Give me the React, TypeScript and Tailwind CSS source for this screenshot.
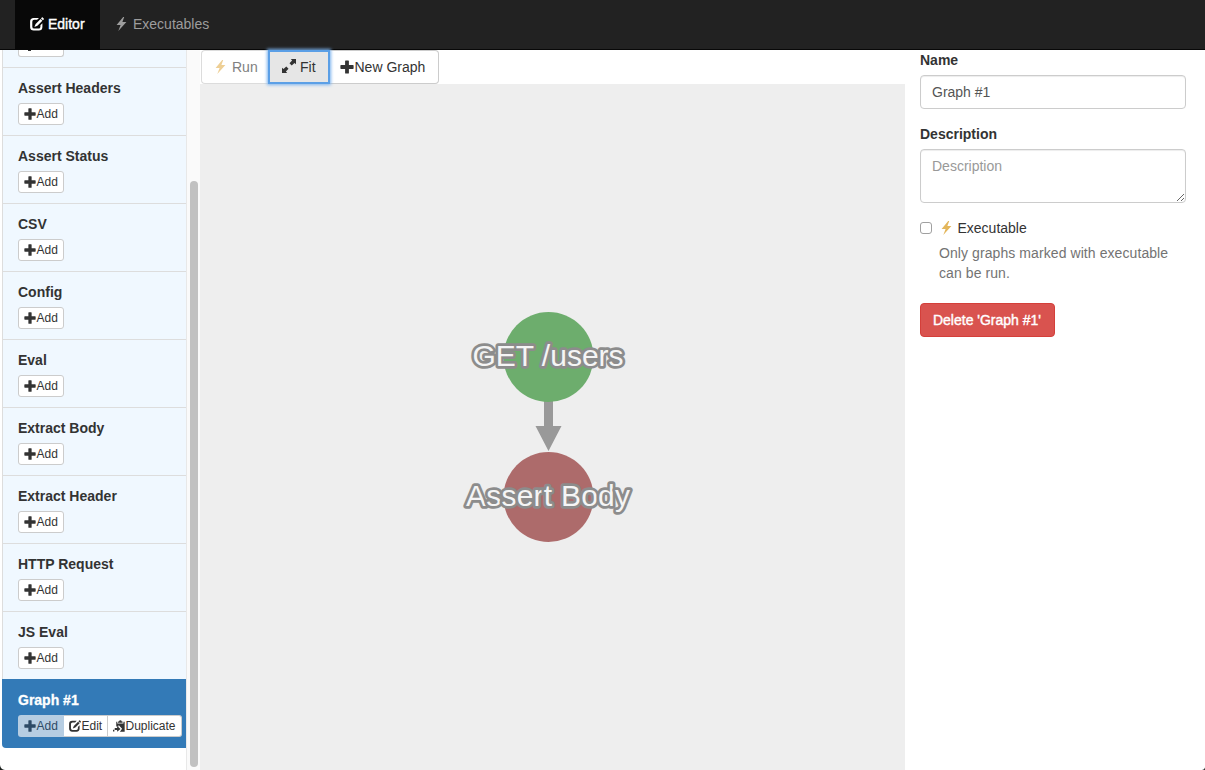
import type { ReactNode } from "react";

type IconProps = { className?: string };

function Icon({ className = "", children }: IconProps & { children: ReactNode }) {
  return (
    <svg viewBox="0 0 14 14" fill="currentColor" className={`shrink-0 ${className}`}>
      {children}
    </svg>
  );
}

const Bolt = ({ className }: IconProps) => (
  <Icon className={className}>
    <path d="M8.2 0 L1.6 8 H5.6 L3.3 14 L11.4 4.9 H7.4 L9.2 0 Z" />
  </Icon>
);

const Plus = ({ className }: IconProps) => (
  <Icon className={className}>
    <path d="M5.1 1 Q5.1 .4 5.7 .4 H8.3 Q8.9 .4 8.9 1 V5.1 H13 Q13.6 5.1 13.6 5.7 V8.3 Q13.6 8.9 13 8.9 H8.9 V13 Q8.9 13.6 8.3 13.6 H5.7 Q5.1 13.6 5.1 13 V8.9 H1 Q.4 8.9 .4 8.3 V5.7 Q.4 5.1 1 5.1 H5.1 Z" />
  </Icon>
);

const Edit = ({ className }: IconProps) => (
  <Icon className={className}>
    <path d="M9 .9 L7.1 2.8 H4.2 Q2.3 2.8 2.3 4.7 V9.7 Q2.3 11.6 4.2 11.6 H8.6 Q10.4 11.6 10.4 9.7 V8.2 L12.4 6.2 V10 Q12.4 13.6 8.8 13.6 H3.8 Q.1 13.6 .1 10 V4.6 Q.1 .9 3.8 .9 Z" />
    <path d="M10.6 1.9 L12.4 3.7 L7.4 8.7 L4.4 10 L5.6 6.9 Z" />
    <path d="M11 1.4 L11.8 .6 Q12.3 .1 12.8 .6 L13.7 1.5 Q14.2 2 13.7 2.5 L12.9 3.3 Z" />
  </Icon>
);

const Expand = ({ className }: IconProps) => (
  <Icon className={className}>
    <path d="M8.8 0 H14 V5.2 L12.5 3.9 L9.7 6.5 L7.5 4.3 L10.1 1.5 Z" />
    <path d="M0 8.8 L1.5 10.1 L4.3 7.5 L6.5 9.7 L3.9 12.5 L5.2 14 H0 Z" />
  </Icon>
);

const Duplicate = ({ className }: IconProps) => (
  <Icon className={className}>
    <path d="M7 1.8 Q7.2 .3 8.6 .3 Q10 .3 10.2 1.8 H11.2 V3.3 H5.8 V1.8 Z" />
    <path d="M3.8 1.9 H5 V4.2 H12.2 V1.9 H13.6 V13.8 H8 L10.6 10.2 L6.5 5.8 V7.5 H3.8 Z" />
    <path d="M2 9.3 H4.8 V7 L8.8 10.4 L4.8 13.8 V11.6 H2 Z" />
    <path d="M0 11.5 H1.6 V13.3 H0 Z" />
  </Icon>
);

const smallButton =
  "flex h-[22px] items-center gap-[0.5px] border border-[#ccc] bg-white px-[5px] text-xs leading-[18px] text-[#333]";

function AddButton() {
  return (
    <button className={`${smallButton} w-[46px] rounded-[3px]`}>
      <Plus className="size-3" />
      Add
    </button>
  );
}

const components = [
  "Assert Headers",
  "Assert Status",
  "CSV",
  "Config",
  "Eval",
  "Extract Body",
  "Extract Header",
  "HTTP Request",
  "JS Eval",
];

function Sidebar() {
  return (
    <aside className="flex h-full w-[200px] shrink-0 overflow-hidden">
      <div className="ml-[2px] w-[184px] shrink-0">
        <div className="flex h-[17px] items-end overflow-hidden border-l border-[#ddd] bg-[#f0f8ff] pb-[10px] pl-[15px]">
          <div className="flex h-[7px] w-[46px] items-start rounded-b-[3px] border border-t-0 border-[#ccc] bg-white pl-[9px]">
            <div className="h-px w-[3px] bg-[#333]" />
          </div>
        </div>
        {components.map((name) => (
          <div
            key={name}
            className="h-[68px] border-t border-l border-[#ddd] bg-[#f0f8ff] pt-[10px] pl-[15px]"
          >
            <h4 className="mb-[5px] h-5 font-bold leading-5">{name}</h4>
            <AddButton />
          </div>
        ))}
        <div className="h-[69px] rounded-bl bg-[#337ab7] pt-[11px] pl-4">
          <h4 className="mb-[5px] h-5 font-bold leading-5 text-white [-webkit-text-stroke:0.3px_white]">
            Graph #1
          </h4>
          <div className="flex">
            <button className="flex h-[22px] w-[46px] items-center gap-[0.5px] rounded-l-[3px] bg-[#b6cde2] px-[6px] text-xs text-[#2d4a66]">
              <Plus className="size-3" />
              Add
            </button>
            <button className={`${smallButton} w-[44px] border-l-0`}>
              <Edit className="size-3" />
              Edit
            </button>
            <button className={`${smallButton} w-[74px] rounded-r-[3px] border-l-0`}>
              <Duplicate className="size-3" />
              Duplicate
            </button>
          </div>
        </div>
      </div>
      <div className="w-[14px] shrink-0 border-l border-[#e8e8e8] bg-[#fafafa] pt-[131px] pl-[3px]">
        <div className="h-[586px] w-2 rounded-full bg-[#c1c1c1]" />
      </div>
    </aside>
  );
}

function Toolbar() {
  return (
    <div className="flex h-[34px] pl-px text-sm leading-5">
      <button className="flex w-[67px] items-center gap-1 rounded-l border border-r-0 border-[#dcdcdc] pl-3 text-[#808080]">
        <Bolt className="size-[14px] text-[#eecf95]" />
        Run
      </button>
      <button className="z-10 flex w-[62px] items-center gap-1 border-2 border-[#5b9fe6] bg-[#e6e6e6] pl-[12px] shadow-[0_0_3px_1px_#7db4ee]">
        <Expand className="mb-[2px] size-[14px]" />
        Fit
      </button>
      <button className="flex w-[109px] items-center gap-[0.5px] rounded-r border border-l-0 border-[#ccc] pl-[10px]">
        <Plus className="size-[14px]" />
        New Graph
      </button>
    </div>
  );
}

function Graph() {
  return (
    <svg
      viewBox="200 84 705 686"
      className="h-[686px] w-[705px] bg-[#eee] font-['Liberation_Sans',sans-serif] text-[30px]"
    >
      <path d="M544 401 H553 V426 H561.5 L548.5 451 L535.5 426 H544 Z" fill="#999" />
      <circle cx="548.5" cy="357" r="45" fill="#6dad6d" />
      <circle cx="548.5" cy="497" r="45" fill="#ad6b6b" />
      <g
        stroke="#8c8c8c"
        strokeWidth="5.5"
        strokeLinejoin="round"
        fill="#8c8c8c"
        textAnchor="middle"
        className="[&>text]:[paint-order:stroke]"
      >
        <text x="548" y="366" fill="#f5f5f5">GET /users</text>
        <text x="548" y="506" textLength="164" fill="#f5f5f5">Assert Body</text>
      </g>
    </svg>
  );
}

function Properties() {
  return (
    <section className="flex w-[300px] flex-col items-start pl-[15px] leading-5">
      <label className="mb-[5px] font-bold">Name</label>
      <input
        defaultValue="Graph #1"
        className="mb-[15px] h-[34px] w-[266px] rounded border border-[#ccc] px-[11px] text-[#555] shadow-[inset_0_1px_1px_rgba(0,0,0,0.075)] outline-none"
      />
      <label className="mb-[5px] font-bold">Description</label>
      <textarea
        placeholder="Description"
        className="mb-[15px] block h-[54px] w-[266px] resize rounded border border-[#ccc] px-[11px] py-[6px] shadow-[inset_0_1px_1px_rgba(0,0,0,0.075)] outline-none placeholder:text-[#999]"
      />
      <label className="flex h-5 items-center">
        <input
          type="checkbox"
          className="mr-2 size-3 appearance-none rounded-[3px] border border-[#a0a0a0] bg-white"
        />
        <Bolt className="mr-[3.5px] size-[14px] text-[#e3b65b]" />
        Executable
      </label>
      <p className="mt-[5px] mb-5 w-[255px] pl-[19px] tracking-[0.08px] text-[#737373]">
        Only graphs marked with executable can be run.
      </p>
      <button className="h-[34px] w-[135px] rounded border border-[#d43f3a] bg-[#d9534f] pr-px text-white [-webkit-text-stroke:0.4px_white]">
        Delete 'Graph #1'
      </button>
    </section>
  );
}

export default function App() {
  return (
    <div className="relative flex h-[770px] w-[1205px] flex-col overflow-hidden bg-white font-['Liberation_Sans',Arial,sans-serif] text-sm text-[#333]">
      <nav className="flex h-[50px] shrink-0 border-b border-[#080808] bg-[#222] pl-[15px] leading-5">
        <a className="flex w-[85px] items-center gap-1 bg-[#080808] pb-[2px] pl-[15px] text-white [-webkit-text-stroke:0.4px_white]">
          <Edit className="size-[14px]" />
          Editor
        </a>
        <a className="flex items-center gap-1 pb-[2px] pl-[15px] text-[#9d9d9d]">
          <Bolt className="size-[14px]" />
          Executables
        </a>
      </nav>
      <div className="flex h-[720px]">
        <Sidebar />
        <main className="w-[705px] shrink-0">
          <Toolbar />
          <Graph />
        </main>
        <Properties />
      </div>
      <svg viewBox="0 0 5 5" className="absolute bottom-0 left-0 size-[5px]">
        <path d="M0 0 Q.5 4.5 5 5 H0 Z" fill="#1a1f1c" />
      </svg>
      <svg viewBox="0 0 5 5" className="absolute right-0 bottom-0 size-[5px]">
        <path d="M5 2.5 Q4.5 4.5 2 5 H5 Z" fill="#333" />
      </svg>
    </div>
  );
}
